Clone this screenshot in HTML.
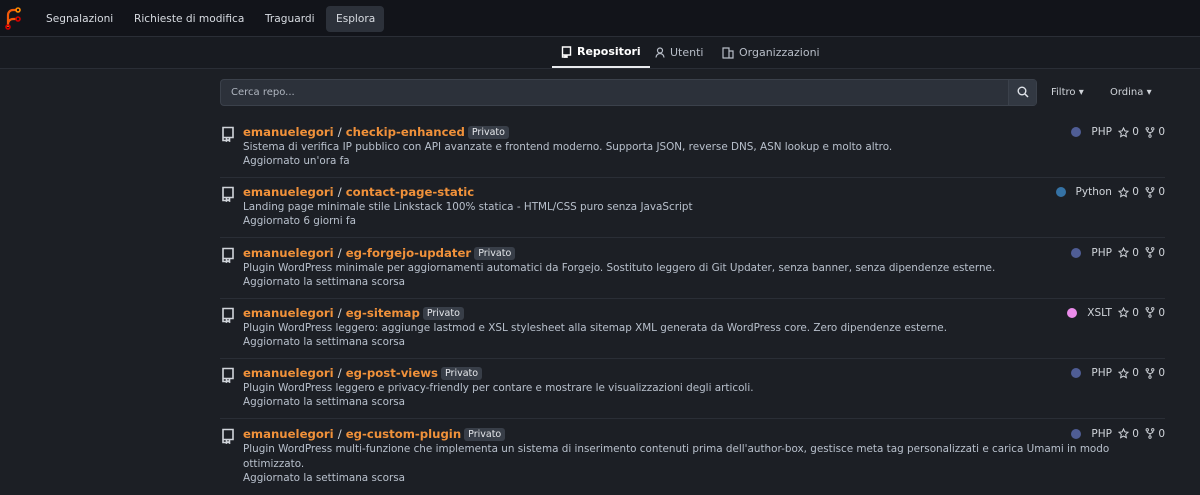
<!DOCTYPE html>
<html><head><meta charset="utf-8"><style>
*{box-sizing:border-box;margin:0;padding:0}
body{width:1200px;height:492px;overflow:hidden;background:#1c1f25;font-family:"DejaVu Sans","Liberation Sans",sans-serif;color:#d0d4da;font-size:11px}
.nav{height:37px;background:#12141a;border-bottom:1px solid #2a2e36;position:relative}
.nav a{position:absolute;top:6px;height:26px;line-height:26px;padding:0 10px;color:#d8dce2;font-size:10.6px;border-radius:4px}
.tabs{height:32px;border-bottom:1px solid #2a2e36;position:relative;background:#181b21}
.tab{position:absolute;top:0;height:31px;font-size:11px;color:#b8bec8;display:flex;align-items:center;gap:5px}
.tab.act{color:#fff;font-weight:bold;border-bottom:2px solid #e8eaee}
.search{position:absolute;left:220px;top:79px;width:817px;height:27px;background:#2c313a;border:1px solid #3b414b;border-radius:4px}
.search span{position:absolute;left:10px;top:7px;color:#b0b6c0;font-size:10px}
.search .btn{position:absolute;right:0;top:0;width:28px;height:25px;border-left:1px solid #3b414b;background:#323842}
.dd{position:absolute;top:87px;font-size:10px;color:#d0d4da}
.row{position:absolute;left:220px;width:945px;height:60px;border-bottom:1px solid #2a2e36}
.ic{position:absolute;left:1px;top:8px}
.t{position:absolute;left:23px;top:7px;font-size:11.7px;font-weight:bold;color:#f0913a;white-space:nowrap}
.t .s{color:#d0d4da;font-weight:normal}
.badge{display:inline-block;font-size:9.5px;font-weight:normal;color:#e6e8ec;background:#383e48;border-radius:3px;padding:1px 4px;margin-left:3px;vertical-align:1px}
.d{position:absolute;left:23px;top:22px;font-size:10.4px;color:#b8c0cc;width:870px;line-height:15px}
.u{position:absolute;left:23px;top:37px;font-size:10.4px;color:#b8c0cc}
.m{position:absolute;right:0;top:8px;font-size:10.5px;color:#d0d4da;display:flex;align-items:center;gap:3px}
.dot{width:10px;height:10px;border-radius:50%;margin-right:7px}
</style></head><body>
<div class="nav">
<svg style="position:absolute;left:4px;top:6px" width="18" height="24" viewBox="0 0 18 24"><path d="M4 21V9a5 5 0 0 1 5-5h4M4 21v-3a5 5 0 0 1 5-5h4" fill="none" stroke="#f25a0a" stroke-width="2.2"/><circle cx="4" cy="21" r="2" fill="none" stroke="#d40000" stroke-width="1.6"/><circle cx="14" cy="4" r="2" fill="none" stroke="#ff8a00" stroke-width="1.6"/><circle cx="14" cy="13" r="2" fill="none" stroke="#d40000" stroke-width="1.6"/></svg>
<a style="left:36px">Segnalazioni</a><a style="left:124px">Richieste di modifica</a><a style="left:255px">Traguardi</a><a style="left:326px;width:58px;background:#2c313a">Esplora</a>
</div>
<div class="tabs">
<div class="tab act" style="left:552px;padding:0 9px"><svg width="11" height="12" viewBox="0 0 11 12"><path d="M1.5 1h8v8h-8zM1.5 9v2h2M4 9v2.5l1-.8 1 .8V9" fill="none" stroke="#fff" stroke-width="1.4"/></svg>Repositori</div>
<div class="tab" style="left:655px"><svg width="10" height="11" viewBox="0 0 10 11"><circle cx="5" cy="3.5" r="2.5" fill="none" stroke="#b8bec8" stroke-width="1.2"/><path d="M1 10.5a4 4 0 0 1 8 0" fill="none" stroke="#b8bec8" stroke-width="1.2"/></svg>Utenti</div>
<div class="tab" style="left:722px"><svg width="12" height="12" viewBox="0 0 12 12"><path d="M1 11V1h6v10M7 4h4v7H.5" fill="none" stroke="#b8bec8" stroke-width="1.2"/></svg>Organizzazioni</div>
</div>
<div class="search"><span>Cerca repo...</span><div class="btn"><svg style="margin:6px 8px" width="12" height="12" viewBox="0 0 12 12"><circle cx="5" cy="5" r="3.8" fill="none" stroke="#e0e4ea" stroke-width="1.4"/><path d="M8 8l3 3" stroke="#e0e4ea" stroke-width="1.5"/></svg></div></div>
<div class="dd" style="left:1051px">Filtro ▾</div><div class="dd" style="left:1110px">Ordina ▾</div>
<div id="list"></div>
<script>
const R=[["checkip-enhanced",1,"Sistema di verifica IP pubblico con API avanzate e frontend moderno. Supporta JSON, reverse DNS, ASN lookup e molto altro.","Aggiornato un'ora fa","PHP","#4f5d95"],
["contact-page-static",0,"Landing page minimale stile Linkstack 100% statica - HTML/CSS puro senza JavaScript","Aggiornato 6 giorni fa","Python","#3572a5"],
["eg-forgejo-updater",1,"Plugin WordPress minimale per aggiornamenti automatici da Forgejo. Sostituto leggero di Git Updater, senza banner, senza dipendenze esterne.","Aggiornato la settimana scorsa","PHP","#4f5d95"],
["eg-sitemap",1,"Plugin WordPress leggero: aggiunge lastmod e XSL stylesheet alla sitemap XML generata da WordPress core. Zero dipendenze esterne.","Aggiornato la settimana scorsa","XSLT","#eb8ceb"],
["eg-post-views",1,"Plugin WordPress leggero e privacy-friendly per contare e mostrare le visualizzazioni degli articoli.","Aggiornato la settimana scorsa","PHP","#4f5d95"],
["eg-custom-plugin",1,"Plugin WordPress multi-funzione che implementa un sistema di inserimento contenuti prima dell'author-box, gestisce meta tag personalizzati e carica Umami in modo ottimizzato.","Aggiornato la settimana scorsa","PHP","#4f5d95"]];
const star='<svg width="11" height="11" viewBox="0 0 12 12"><path d="M6 1l1.5 3.2 3.5.4-2.6 2.4.7 3.5L6 8.8 2.9 10.5l.7-3.5L1 4.6l3.5-.4z" fill="none" stroke="#d0d4da" stroke-width="1.1"/></svg>';
const fork='<svg width="10" height="11" viewBox="0 0 10 12"><circle cx="2" cy="2" r="1.3" fill="none" stroke="#d0d4da"/><circle cx="8" cy="2" r="1.3" fill="none" stroke="#d0d4da"/><circle cx="5" cy="10" r="1.3" fill="none" stroke="#d0d4da"/><path d="M2 3.3v1.5l3 1.5 3-1.5V3.3M5 6.3v2.4" fill="none" stroke="#d0d4da" stroke-width="1.1"/></svg>';
const icon='<svg width="14" height="16" viewBox="0 0 14 16"><path d="M2 1.5h10v10H2zM2 11.5v3h3M5.5 11.5v3.5l1.5-1 1.5 1v-3.5" fill="none" stroke="#d0d4da" stroke-width="1.6"/></svg>';
let h='',y=118;
R.forEach((r,i)=>{const hh=i==5?75:60;
h+=`<div class="row" style="top:${y}px;height:${hh}px;${i==5?'border:none':''}"><div class="ic">${icon}</div><div class="t">emanuelegori <span class="s">/</span> ${r[0]}${r[1]?'<span class="badge">Privato</span>':''}</div><div class="d">${r[2]}</div><div class="u" style="top:${i==5?52:37}px">${r[3]}</div><div class="m"><span class="dot" style="background:${r[5]}"></span>${r[4]}&nbsp;${star}0&nbsp;${fork}0</div></div>`;y+=60.3;});
document.getElementById('list').innerHTML=h;
</script>
</body></html>
